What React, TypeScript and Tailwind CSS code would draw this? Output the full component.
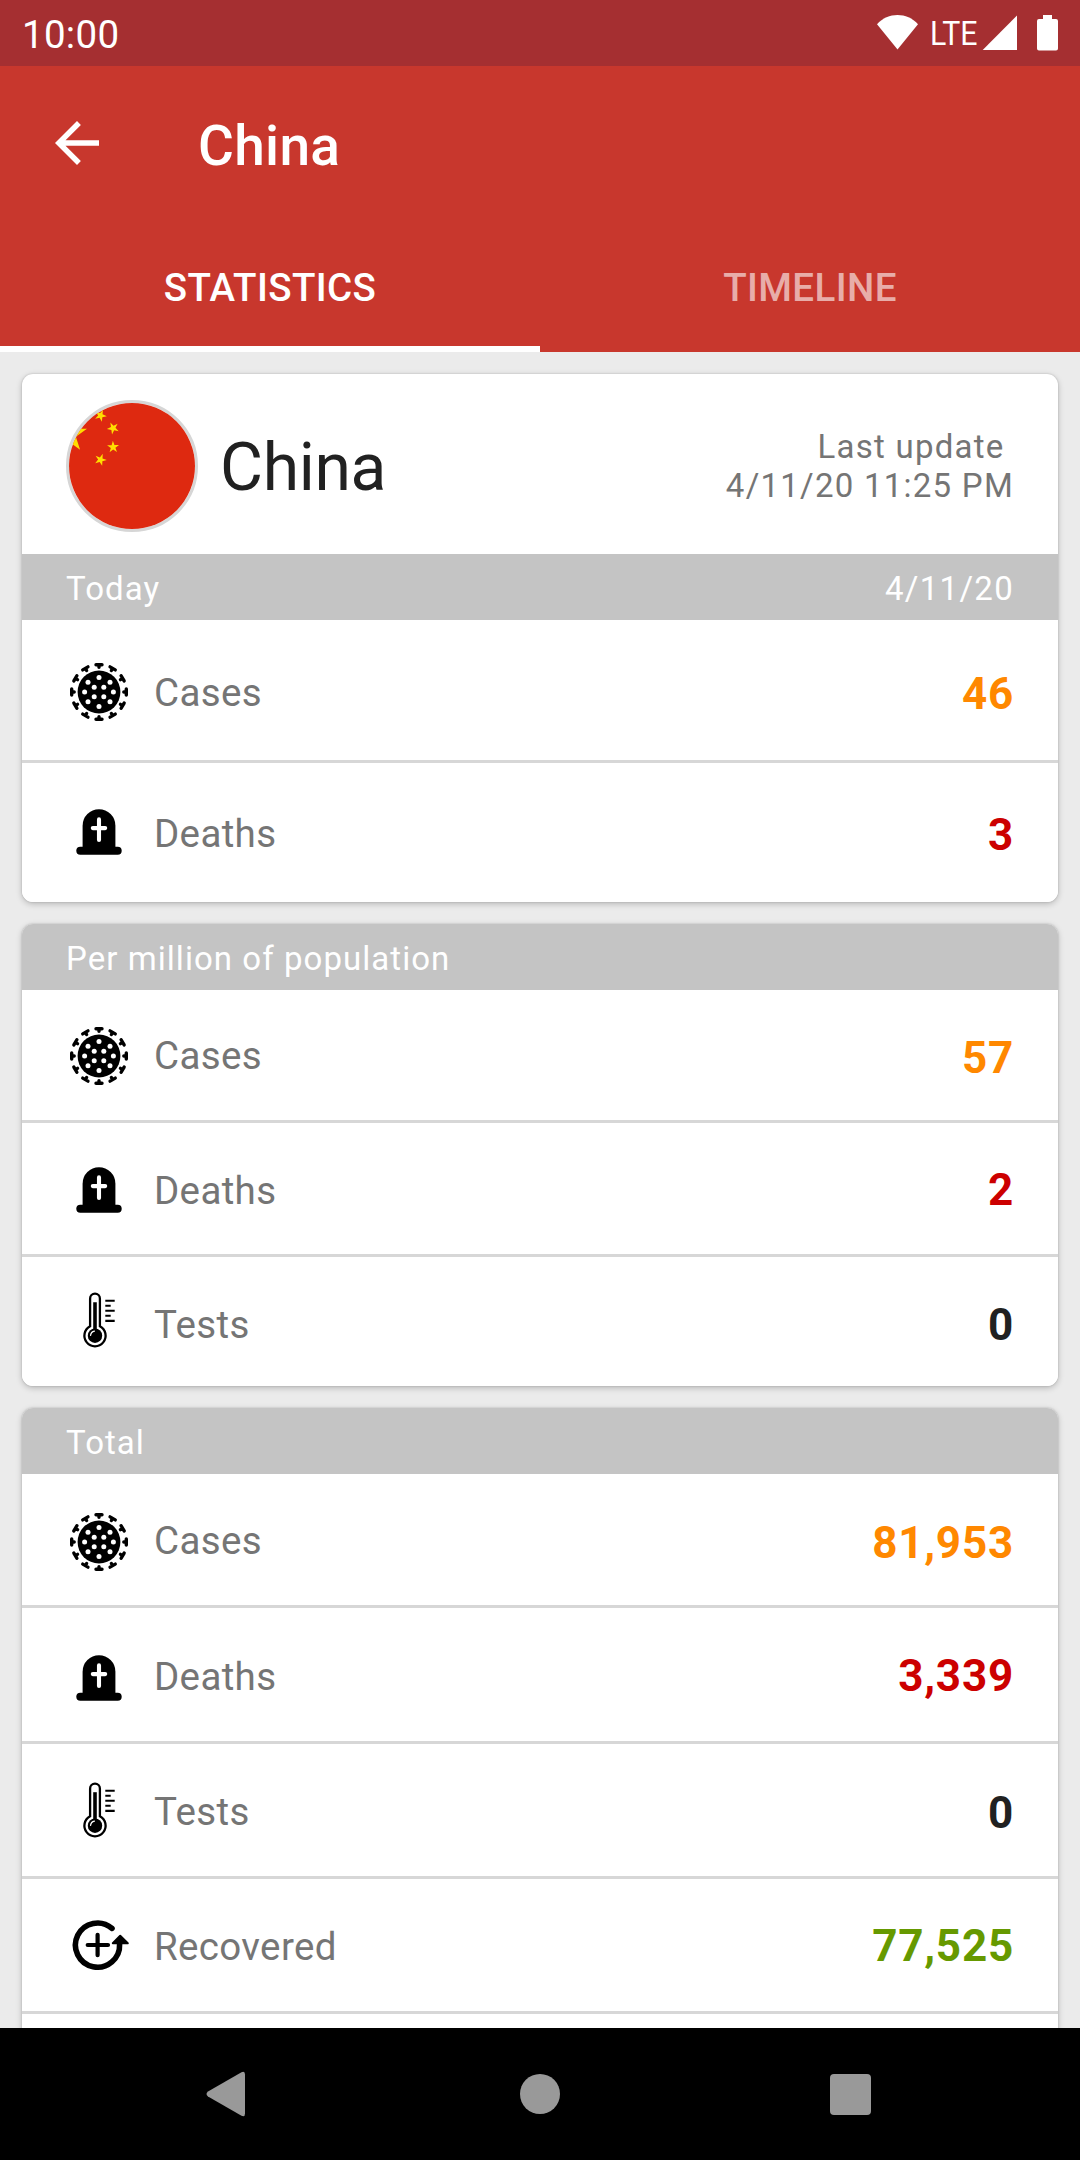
import type { ReactNode } from "react";

function star(cx: number, cy: number, r: number, angle: number) {
  const pts: string[] = [];
  for (let i = 0; i < 10; i++) {
    const rad = i % 2 === 0 ? r : r * 0.382;
    const a = angle + (i * Math.PI) / 5;
    pts.push(`${(cx + rad * Math.cos(a)).toFixed(3)},${(cy + rad * Math.sin(a)).toFixed(3)}`);
  }
  return pts.join(" ");
}

const SMALL_STARS = [
  [10, 2],
  [12, 4],
  [12, 7],
  [10, 9],
];

function Flag() {
  return (
    <svg viewBox="0 0 30 20" preserveAspectRatio="xMidYMid slice" className="size-full">
      <rect width="30" height="20" fill="#de2910" />
      <polygon points={star(5, 5, 3, -Math.PI / 2)} fill="#ffde00" />
      {SMALL_STARS.map(([x, y]) => (
        <polygon key={`${x}-${y}`} points={star(x, y, 1, Math.atan2(5 - y, 5 - x))} fill="#ffde00" />
      ))}
    </svg>
  );
}

function IconBox({ children }: { children: ReactNode }) {
  return (
    <svg viewBox="-33 -33 66 66" className="size-[66px]">
      {children}
    </svg>
  );
}

const SPIKES = Array.from({ length: 12 }, (_, i) => i * 30);
const SPOTS = [
  [0, -14.4],
  [11, -9.7],
  [14.4, 0],
  [11, 9.7],
  [0, 14.4],
  [-11, 9.7],
  [-14.4, 0],
  [-11, -9.7],
  [-4.8, -4.8],
  [4.8, -4.8],
  [-4.8, 4.8],
  [4.8, 4.8],
];

function VirusIcon() {
  return (
    <IconBox>
      <circle r="21.4" />
      {SPIKES.map((a) => (
        <path
          key={a}
          d="M-3 -27.3H3M0 -27V-24.8"
          transform={`rotate(${a})`}
          stroke="#000"
          strokeWidth="3.4"
          strokeLinecap="round"
        />
      ))}
      {SPOTS.map(([x, y]) => (
        <circle key={`${x},${y}`} cx={x} cy={y} r="2.5" fill="#fff" />
      ))}
    </IconBox>
  );
}

function TombIcon() {
  return (
    <IconBox>
      <path d="M-16.4 17V-6.3A16.4 16.4 0 0 1 16.4 -6.3V17Z" />
      <rect x="-22.7" y="14.8" width="45.4" height="8" rx="4" />
      <path d="M0 -12.6V8M-6.2 -3.9H6.2" stroke="#fff" strokeWidth="4.1" strokeLinecap="round" />
    </IconBox>
  );
}

function ThermometerIcon() {
  return (
    <IconBox>
      <path
        d="M-8.9 6.3V-21.4A4.9 4.9 0 0 1 0.9 -21.4V6.3A10.6 10.6 0 1 1 -8.9 6.3Z"
        fill="none"
        stroke="#000"
        strokeWidth="2.3"
      />
      <path d="M-4 -17.8V12" stroke="#000" strokeWidth="3.6" />
      <circle cx="-4" cy="15.7" r="7.2" />
      <path d="M-8.4 15.3A4.7 4.7 0 0 1 -4.6 11.2" fill="none" stroke="#fff" strokeWidth="1.3" strokeLinecap="round" />
      <path
        d="M6.3 -19.3H15.7M6.3 -14.3H11.7M6.3 -9.3H15.7M6.3 -4.3H11.7M6.3 0.9H15.7"
        stroke="#000"
        strokeWidth="2.1"
      />
    </IconBox>
  );
}

function RecoveredIcon() {
  return (
    <IconBox>
      <path d="M13 -16.6A22.1 22.1 0 1 0 20.6 -1" fill="none" stroke="#000" strokeWidth="5.6" strokeLinecap="round" />
      <path d="M21.2 -9.3L28.8 -1.7H13.8Z" stroke="#000" strokeWidth="2" strokeLinejoin="round" />
      <path d="M-11.3 0H9M-1.4 -10.2V10.2" stroke="#000" strokeWidth="4.2" strokeLinecap="round" />
    </IconBox>
  );
}

type RowProps = {
  icon: ReactNode;
  label: string;
  value: string;
  row: string;
  iconPos: string;
  labelPos: string;
  valuePos: string;
};

function Row({ icon, label, value, row, iconPos, labelPos, valuePos }: RowProps) {
  return (
    <div className={`flex items-start bg-white px-[44px] ${row}`}>
      <div className={iconPos}>{icon}</div>
      <div className={`ml-[22px] text-[38.5px] leading-[44px] tracking-[0.35px] text-[#757575] ${labelPos}`}>{label}</div>
      <div className={`ml-auto text-[44px] leading-[52px] font-bold tracking-[0.8px] ${valuePos}`}>{value}</div>
    </div>
  );
}

function Divider() {
  return <div className="h-[3px] bg-[#d7d7d7]" />;
}

function Band({ left, right }: { left: string; right?: string }) {
  return (
    <div className="flex h-[66px] items-start justify-between bg-[#c4c4c4] px-[44px] pt-[16px] text-[33px] leading-[38px] tracking-[1.05px] text-white">
      <span>{left}</span>
      {right && <span className="tracking-[1.3px]">{right}</span>}
    </div>
  );
}

function Card({ children }: { children: ReactNode }) {
  return (
    <section className="overflow-hidden rounded-[11px] bg-white shadow-[0_2px_6px_rgba(0,0,0,0.22),0_0_2px_rgba(0,0,0,0.2)]">
      {children}
    </section>
  );
}

export default function App() {
  return (
    <div className="flex h-[2160px] w-[1080px] flex-col overflow-hidden bg-[#ebebeb] font-['Roboto',sans-serif]">
      <div className="flex h-[66px] shrink-0 items-start justify-between bg-[#a52f31] pr-[22px] pl-[22px] text-white">
        <span className="mt-[13px] text-[38.5px] leading-[44px] tracking-[0.3px]">10:00</span>
        <svg viewBox="870 0 188 66" className="h-[66px] w-[188px]" fill="#fff">
          <path d="M897.5 49.5L877 24.3C888 12 907 12 918 24.3Z" />
          <text x="930" y="44.7" fontSize="34" textLength="47.5" lengthAdjust="spacingAndGlyphs">
            LTE
          </text>
          <path d="M982.7 50L1017 15.4V50Z" />
          <path d="M1043 15H1052V19H1056A2 2 0 0 1 1058 21V48.5A2 2 0 0 1 1056 50.5H1039A2 2 0 0 1 1037 48.5V21A2 2 0 0 1 1039 19H1043Z" />
        </svg>
      </div>

      <header className="h-[286px] shrink-0 bg-[#c8372d] text-white">
        <div className="flex h-[154px] items-start pl-[44px]">
          <svg viewBox="0 0 24 24" className="mt-[44px] size-[66px]" fill="#fff">
            <path d="M20 11H7.83l5.59-5.59L12 4l-8 8 8 8 1.41-1.41L7.83 13H20v-2z" />
          </svg>
          <h1 className="mt-[48px] ml-[88px] text-[55px] leading-[64px] font-medium tracking-[0.3px]">China</h1>
        </div>
        <div className="grid h-[132px] grid-cols-2 text-center text-[38.5px] leading-[44px] font-medium tracking-[0.4px]">
          <div className="h-[132px] border-b-[6px] border-white pt-[46px]">STATISTICS</div>
          <div className="h-[132px] pt-[46px] text-white/60">TIMELINE</div>
        </div>
      </header>

      <main className="flex h-[1676px] shrink-0 flex-col gap-[22px] overflow-hidden px-[22px] pt-[22px] *:shrink-0">
        <Card>
          <div className="flex h-[180px] items-start px-[44px]">
            <div className="mt-[26px] size-[132px] overflow-hidden rounded-full border-3 border-[#d6d6d6]">
              <Flag />
            </div>
            <div className="mt-[55px] ml-[22px] text-[66px] leading-[78px] tracking-[-0.3px] text-[#212121]">China</div>
            <div className="mt-[53px] ml-auto text-right text-[33px] leading-[39px] tracking-[1.25px] whitespace-pre text-[#757575]">
              {"Last update "}
              <br />
              4/11/20 11:25 PM
            </div>
          </div>
          <Band left="Today" right="4/11/20" />
          <Row icon={<VirusIcon />} label="Cases" value="46" row="h-[140px]" iconPos="mt-[39px]" labelPos="mt-[51px]" valuePos="mt-[48px] text-[#ff8800]" />
          <Divider />
          <Row icon={<TombIcon />} label="Deaths" value="3" row="h-[139px]" iconPos="mt-[36px]" labelPos="mt-[49px]" valuePos="mt-[46px] text-[#cc0000]" />
        </Card>

        <Card>
          <Band left="Per million of population" />
          <Row icon={<VirusIcon />} label="Cases" value="57" row="h-[130px]" iconPos="mt-[33px]" labelPos="mt-[44px]" valuePos="mt-[42px] text-[#ff8800]" />
          <Divider />
          <Row icon={<TombIcon />} label="Deaths" value="2" row="h-[131px]" iconPos="mt-[34px]" labelPos="mt-[46px]" valuePos="mt-[41px] text-[#cc0000]" />
          <Divider />
          <Row icon={<ThermometerIcon />} label="Tests" value="0" row="h-[129px]" iconPos="mt-[30px]" labelPos="mt-[46px]" valuePos="mt-[42px] text-[#212121]" />
        </Card>

        <Card>
          <Band left="Total" />
          <Row icon={<VirusIcon />} label="Cases" value="81,953" row="h-[131px]" iconPos="mt-[35px]" labelPos="mt-[45px]" valuePos="mt-[43px] text-[#ff8800]" />
          <Divider />
          <Row icon={<TombIcon />} label="Deaths" value="3,339" row="h-[133px]" iconPos="mt-[37px]" labelPos="mt-[47px]" valuePos="mt-[42px] text-[#cc0000]" />
          <Divider />
          <Row icon={<ThermometerIcon />} label="Tests" value="0" row="h-[132px]" iconPos="mt-[33px]" labelPos="mt-[46px]" valuePos="mt-[43px] text-[#212121]" />
          <Divider />
          <Row icon={<RecoveredIcon />} label="Recovered" value="77,525" row="h-[132px]" iconPos="mt-[33px]" labelPos="mt-[46px]" valuePos="mt-[41px] text-[#669900]" />
          <Divider />
          <div className="h-[130px]" />
        </Card>
      </main>

      <nav className="flex h-[132px] shrink-0 items-center bg-black pl-[206px]">
        <svg viewBox="0 0 40 46" className="h-[46px] w-[40px]" fill="#999">
          <path d="M2 20.5L35.5 1.2Q39 -0.4 39 3.5V42.5Q39 46.4 35.5 44.8L2 25.5Q-1 23 2 20.5Z" />
        </svg>
        <div className="ml-[274px] size-[40px] rounded-full bg-[#999]" />
        <div className="mt-px ml-[270px] size-[41px] rounded-[4px] bg-[#999]" />
      </nav>
    </div>
  );
}
